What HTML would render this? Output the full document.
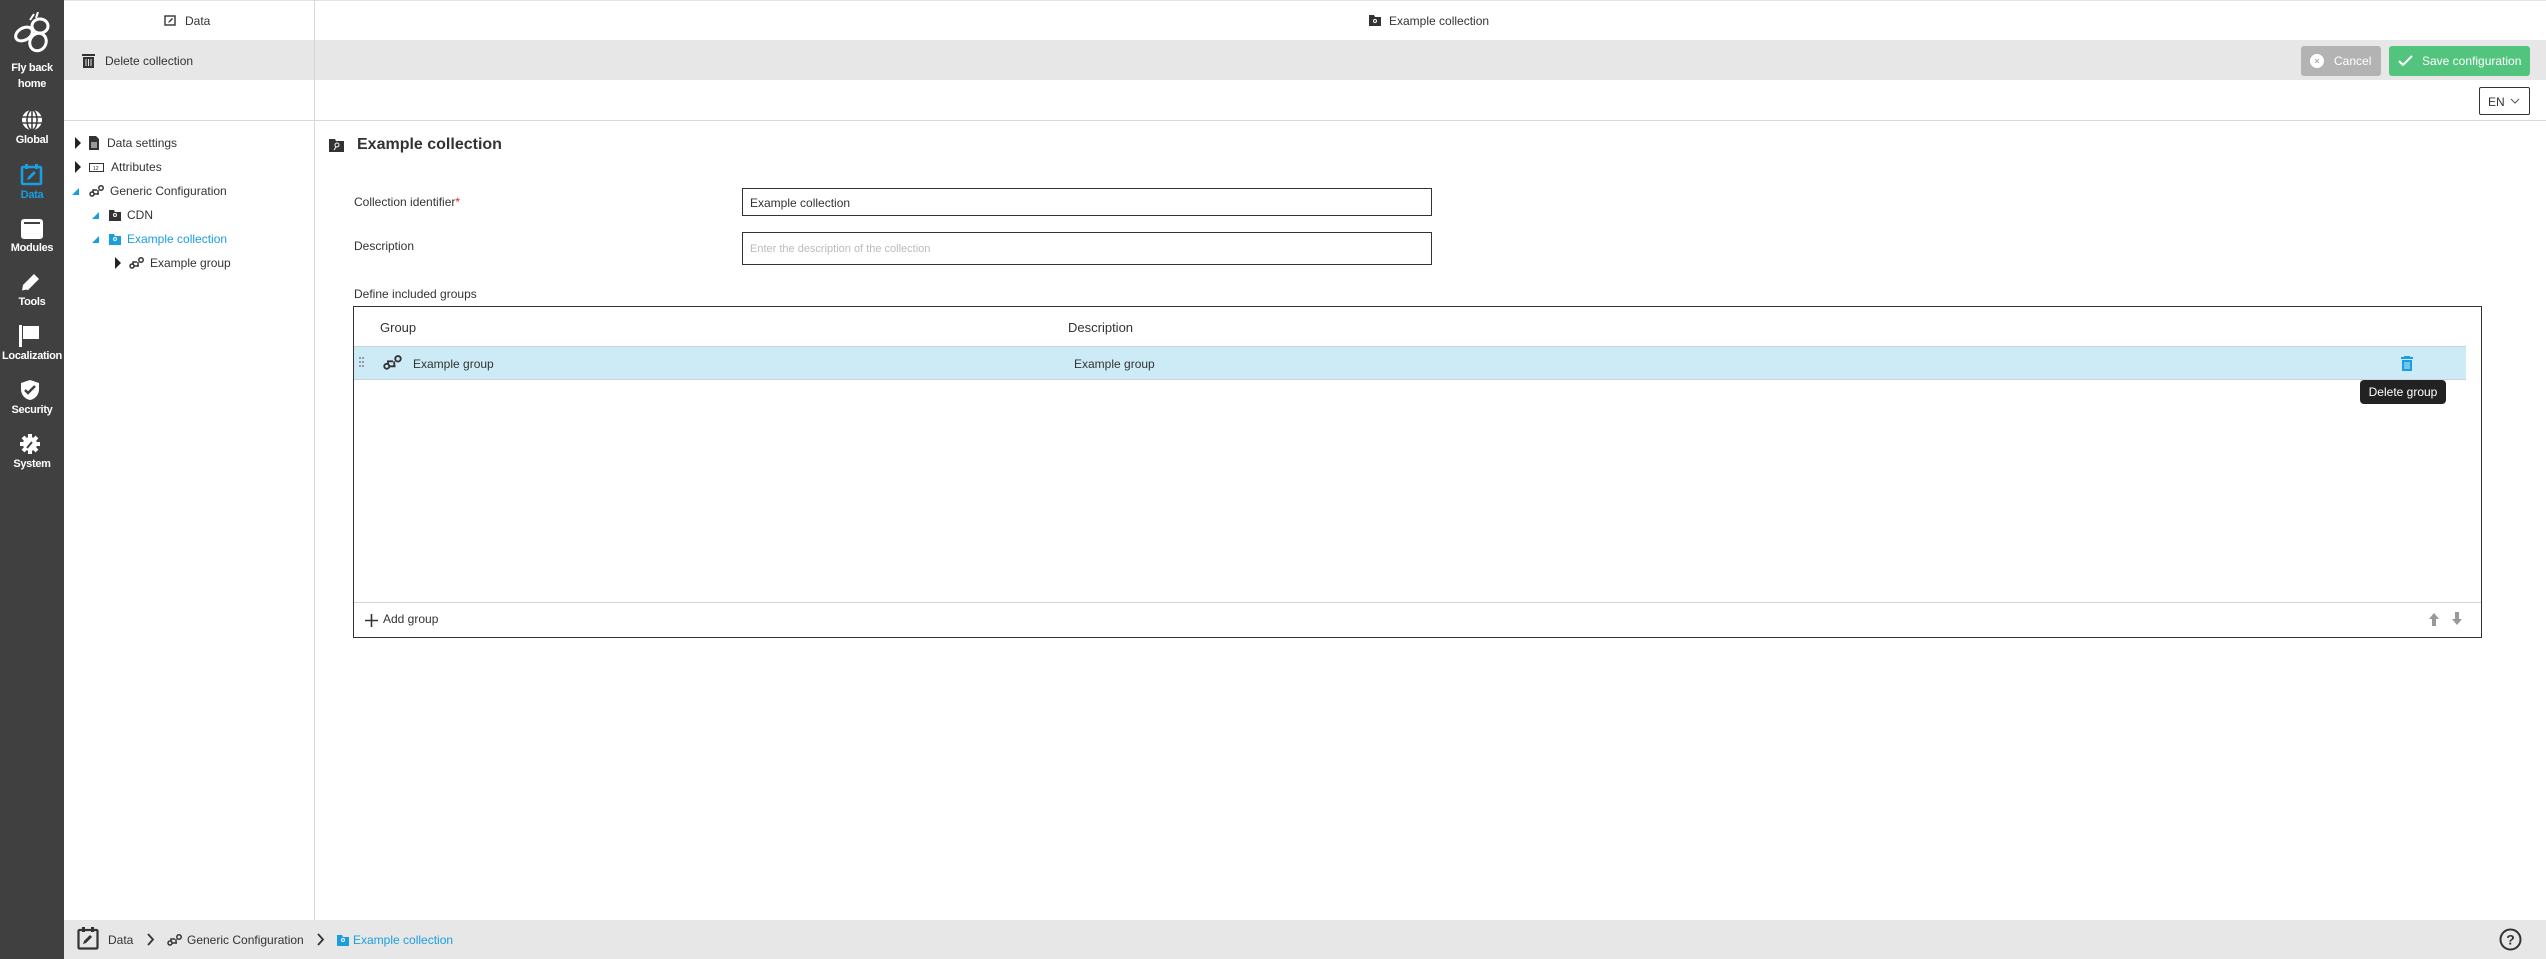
<!DOCTYPE html>
<html><head><meta charset="utf-8">
<style>
*{box-sizing:border-box;margin:0;padding:0}
body{width:2546px;height:959px;position:relative;overflow:hidden;background:#fff;font-family:"Liberation Sans",Arial,sans-serif;font-size:12px;color:#333}
.a{position:absolute}
.side{left:0;top:0;width:64px;height:959px;background:#404040}
.nav{position:absolute;left:0;width:64px;text-align:center;color:#fff;font-size:11px;font-weight:bold;letter-spacing:-0.3px}
.t{position:absolute;white-space:nowrap}
.tri{position:absolute;width:0;height:0;border-top:6px solid transparent;border-bottom:6px solid transparent;border-left:6px solid #222}
.otri{position:absolute;width:0;height:0;border-left:7px solid transparent;border-bottom:7px solid #1a9ee0}
.btn{position:absolute;border-radius:3px;color:#fff;font-size:12px}
</style></head><body>
<div class="a side"></div>
<svg class="a" style="left:12px;top:12px" width="40" height="42" viewBox="0 0 40 42"><g fill="none" stroke="#fff" stroke-width="3"><ellipse cx="12" cy="22" rx="9" ry="6" transform="rotate(-30 12 22)"/><ellipse cx="28" cy="14" rx="8" ry="7"/><ellipse cx="26" cy="30" rx="8" ry="9" transform="rotate(30 26 30)"/></g><path d="M18 8 l4 -6 M24 6 l2 -6" stroke="#fff" stroke-width="2"/></svg>
<div class="nav" style="top:60px;line-height:16px">Fly back<br>home</div>
<svg class="a" style="left:21px;top:109px" width="22" height="22" viewBox="0 0 22 22"><circle cx="11" cy="11" r="10" fill="#fff"/><g stroke="#404040" stroke-width="1.6" fill="none"><path d="M1 8h20M1 14h20M11 1v20"/><ellipse cx="11" cy="11" rx="5" ry="10"/></g></svg>
<div class="nav" style="top:134px">Global</div>
<svg class="a" style="left:20px;top:163px" width="24" height="23" viewBox="0 0 24 23"><rect x="2" y="4" width="19" height="17" rx="1" fill="none" stroke="#1a9ee0" stroke-width="2.6"/><rect x="5" y="1" width="3" height="5" fill="#1a9ee0"/><rect x="15" y="1" width="3" height="5" fill="#1a9ee0"/><path d="M7 17l1-3 6-6 2 2-6 6z" fill="#1a9ee0"/></svg>
<div class="nav" style="top:189px;color:#1a9ee0">Data</div>
<svg class="a" style="left:20px;top:218px" width="24" height="22" viewBox="0 0 24 22"><rect x="1" y="1" width="22" height="20" rx="3" fill="#fff"/><rect x="4" y="4" width="16" height="2" fill="#404040"/></svg>
<div class="nav" style="top:242px">Modules</div>
<svg class="a" style="left:19px;top:272px" width="22" height="22" viewBox="0 0 22 22"><path d="M3 19l1-6 11-11 5 5-11 11z" fill="#fff"/><path d="M3 19l5-1" stroke="#404040"/></svg>
<div class="nav" style="top:296px">Tools</div>
<svg class="a" style="left:19px;top:325px" width="22" height="22" viewBox="0 0 22 22"><rect x="0" y="0" width="3" height="22" fill="#fff"/><path d="M4 1h16v13h-16z" fill="#fff"/></svg>
<div class="nav" style="top:350px;font-size:11px">Localization</div>
<svg class="a" style="left:19px;top:379px" width="22" height="22" viewBox="0 0 22 22"><path d="M11 1l9 3v6c0 6-4 10-9 11-5-1-9-5-9-11v-6z" fill="#fff"/><path d="M6 11l3 3 7-7" stroke="#404040" stroke-width="2.5" fill="none"/></svg>
<div class="nav" style="top:404px">Security</div>
<svg class="a" style="left:19px;top:433px" width="22" height="22" viewBox="0 0 22 22"><circle cx="11" cy="11" r="7" fill="#fff"/><g stroke="#fff" stroke-width="4"><path d="M11 1v20M1 11h20M4 4l14 14M18 4l-14 14"/></g><path d="M8 15l5-6" stroke="#404040" stroke-width="2"/></svg>
<div class="nav" style="top:458px">System</div>

<div class="a" style="left:64px;top:0;width:2482px;height:1px;background:#e3e3e3"></div>
<div class="a" style="left:314px;top:0;width:1px;height:920px;background:#d8d8d8"></div>
<svg class="a" style="left:164px;top:14px" width="12" height="12" viewBox="0 0 12 12"><rect x="1" y="2" width="10" height="9" fill="none" stroke="#333" stroke-width="1.4"/><path d="M4 9l1-2 3-3 1 1-3 3z" fill="#333"/></svg>
<div class="t" style="left:185px;top:14px">Data</div>
<svg class="a" style="left:1369px;top:14px" width="12" height="12" viewBox="0 0 12 12"><path d="M0 1h5l1 2h6v9h-12z" fill="#333"/><circle cx="6" cy="7" r="1.5" stroke="#fff" fill="none"/></svg>
<div class="t" style="left:1389px;top:14px">Example collection</div>
<div class="a" style="left:64px;top:40px;width:2482px;height:40px;background:#e7e7e7"></div>
<div class="a" style="left:314px;top:40px;width:1px;height:40px;background:#d4d4d4"></div>
<svg class="a" style="left:82px;top:53px" width="13" height="15" viewBox="0 0 13 15"><rect x="0" y="1" width="13" height="2" fill="#333"/><rect x="1" y="4" width="11" height="11" fill="#333"/><g stroke="#e7e7e7"><path d="M4 6v7M6.5 6v7M9 6v7"/></g></svg>
<div class="t" style="left:105px;top:54px">Delete collection</div>
<div class="btn" style="left:2301px;top:46px;width:80px;height:30px;background:#b3b3b3"><svg class="a" style="left:9px;top:8px" width="14" height="14"><circle cx="7" cy="7" r="7" fill="#fff"/><path d="M5 5l4 4M9 5l-4 4" stroke="#b3b3b3" stroke-width="1.2"/></svg><span class="t" style="left:33px;top:8px">Cancel</span></div>
<div class="btn" style="left:2389px;top:46px;width:141px;height:30px;background:#52c47e"><svg class="a" style="left:9px;top:9px" width="16" height="12"><path d="M1 6l4 4 9-9" stroke="#fff" stroke-width="2" fill="none"/></svg><span class="t" style="left:33px;top:8px">Save configuration</span></div>
<div class="a" style="left:2479px;top:87px;width:51px;height:28px;border:1px solid #333;border-radius:2px"><span class="t" style="left:8px;top:7px">EN</span><svg class="a" style="left:30px;top:10px" width="10" height="7"><path d="M1 1l4 4 4-4" stroke="#555" fill="none"/></svg></div>
<div class="a" style="left:64px;top:120px;width:2482px;height:1px;background:#d8d8d8"></div>

<div class="tri" style="left:75px;top:137px"></div>
<svg class="a" style="left:89px;top:136px" width="10" height="14"><path d="M0 0h7l3 3v11h-10z" fill="#333"/><path d="M2 7h6M2 9h6M2 11h6" stroke="#fff"/></svg>
<div class="t" style="left:107px;top:136px">Data settings</div>
<div class="tri" style="left:75px;top:161px"></div>
<svg class="a" style="left:89px;top:163px" width="15" height="9"><rect x="0.5" y="0.5" width="14" height="8" fill="none" stroke="#333"/><text x="4" y="7" font-size="5" fill="#333">12</text></svg>
<div class="t" style="left:111px;top:160px">Attributes</div>
<div class="otri" style="left:72px;top:188px"></div>
<svg class="a" style="left:89px;top:185px" width="16" height="12" viewBox="0 0 16 12"><g fill="none" stroke="#333" stroke-width="1.5"><circle cx="3" cy="9" r="2"/><circle cx="12" cy="3" r="2.2"/><path d="M5 9h5M8 5h-4v2M9 5v4"/></g></svg>
<div class="t" style="left:110px;top:184px">Generic Configuration</div>
<div class="otri" style="left:92px;top:212px"></div>
<svg class="a" style="left:109px;top:209px" width="12" height="12"><path d="M0 1h5l1 2h6v9h-12z" fill="#333"/><circle cx="6" cy="6" r="1.5" stroke="#fff" fill="none"/></svg>
<div class="t" style="left:127px;top:208px">CDN</div>
<div class="otri" style="left:92px;top:236px"></div>
<svg class="a" style="left:109px;top:233px" width="12" height="12"><path d="M0 1h5l1 2h6v9h-12z" fill="#1a9ee0"/><circle cx="6" cy="6" r="1.5" stroke="#fff" fill="none"/></svg>
<div class="t" style="left:127px;top:232px;color:#1a9ee0">Example collection</div>
<div class="tri" style="left:115px;top:257px"></div>
<svg class="a" style="left:129px;top:257px" width="16" height="12" viewBox="0 0 16 12"><g fill="none" stroke="#333" stroke-width="1.5"><circle cx="3" cy="9" r="2"/><circle cx="12" cy="3" r="2.2"/><path d="M5 9h5M8 5h-4v2M9 5v4"/></g></svg>
<div class="t" style="left:150px;top:256px">Example group</div>

<svg class="a" style="left:329px;top:138px" width="15" height="14"><path d="M0 1h6l1 2h8v11h-15z" fill="#333"/><circle cx="8" cy="7" r="2" stroke="#fff" fill="none"/><path d="M7 9l-2 3" stroke="#fff"/></svg>
<div class="t" style="left:357px;top:136px;font-size:16px;font-weight:bold;color:#333">Example collection</div>
<div class="t" style="left:354px;top:195px">Collection identifier<span style="color:#d22">*</span></div>
<div class="a" style="left:742px;top:188px;width:690px;height:28px;border:1px solid #333"><span class="t" style="left:7px;top:7px">Example collection</span></div>
<div class="t" style="left:354px;top:239px">Description</div>
<div class="a" style="left:742px;top:232px;width:690px;height:33px;border:1px solid #333"><span class="t" style="left:7px;top:10px;font-size:11px;color:#bbb">Enter the description of the collection</span></div>
<div class="t" style="left:354px;top:287px">Define included groups</div>
<div class="a" style="left:353px;top:306px;width:2129px;height:332px;border:1px solid #333"></div>
<div class="t" style="left:380px;top:320px;font-size:13px">Group</div>
<div class="t" style="left:1068px;top:320px;font-size:13px">Description</div>
<div class="a" style="left:354px;top:346px;width:2112px;height:34px;background:#cdebf7;border-top:1px solid #c8d4d9;border-bottom:1px solid #c8d4d9"></div>
<svg class="a" style="left:359px;top:357px" width="6" height="11"><g fill="#999"><rect x="0" y="0" width="2" height="2"/><rect x="3" y="0" width="2" height="2"/><rect x="0" y="4" width="2" height="2"/><rect x="3" y="4" width="2" height="2"/><rect x="0" y="8" width="2" height="2"/><rect x="3" y="8" width="2" height="2"/></g></svg>
<svg class="a" style="left:383px;top:355px" width="20" height="15" viewBox="0 0 16 12"><g fill="none" stroke="#333" stroke-width="1.5"><circle cx="3" cy="9" r="2"/><circle cx="12" cy="3" r="2.2"/><path d="M5 9h5M8 5h-4v2M9 5v4"/></g></svg>
<div class="t" style="left:413px;top:357px">Example group</div>
<div class="t" style="left:1074px;top:357px">Example group</div>
<svg class="a" style="left:2401px;top:356px" width="12" height="15"><rect x="0" y="1" width="12" height="2" fill="#1a9ee0"/><rect x="3" y="0" width="6" height="2" fill="#1a9ee0"/><rect x="1" y="4" width="10" height="11" fill="#1a9ee0"/><g stroke="#cdebf7"><path d="M4 6v7M6 6v7M8 6v7"/></g></svg>
<div class="a" style="left:2360px;top:380px;width:86px;height:24px;background:#222;border-radius:4px;color:#fff;font-size:12px;text-align:center;line-height:24px">Delete group</div>
<div class="a" style="left:354px;top:602px;width:2127px;height:1px;background:#d4d4d4"></div>
<svg class="a" style="left:365px;top:614px" width="13" height="13"><path d="M6.5 0v13M0 6.5h13" stroke="#333" stroke-width="1.6"/></svg>
<div class="t" style="left:383px;top:612px">Add group</div>
<svg class="a" style="left:2428px;top:612px" width="12" height="14"><path d="M6 1l5 6h-3v7h-4v-7h-3z" fill="#999"/></svg>
<svg class="a" style="left:2451px;top:612px" width="12" height="14"><path d="M6 13l5-6h-3v-7h-4v7h-3z" fill="#999"/></svg>

<div class="a" style="left:64px;top:920px;width:2482px;height:39px;background:#e7e7e7"></div>
<svg class="a" style="left:77px;top:926px" width="22" height="24" viewBox="0 0 22 24"><rect x="1.5" y="4" width="19" height="18.5" rx="1" fill="none" stroke="#333" stroke-width="2.2"/><rect x="5" y="1" width="3" height="5" fill="#333"/><rect x="14" y="1" width="3" height="5" fill="#333"/><path d="M6 18l1-3 6-6 2 2-6 6z" fill="#333"/></svg>
<div class="t" style="left:108px;top:933px">Data</div>
<svg class="a" style="left:147px;top:933px" width="8" height="13"><path d="M1 1l5 5.5-5 5.5" stroke="#333" stroke-width="1.8" fill="none"/></svg>
<svg class="a" style="left:167px;top:934px" width="16" height="12" viewBox="0 0 16 12"><g fill="none" stroke="#333" stroke-width="1.5"><circle cx="3" cy="9" r="2"/><circle cx="12" cy="3" r="2.2"/><path d="M5 9h5M8 5h-4v2M9 5v4"/></g></svg>
<div class="t" style="left:187px;top:933px">Generic Configuration</div>
<svg class="a" style="left:317px;top:933px" width="8" height="13"><path d="M1 1l5 5.5-5 5.5" stroke="#333" stroke-width="1.8" fill="none"/></svg>
<svg class="a" style="left:337px;top:934px" width="12" height="12"><path d="M0 1h5l1 2h6v9h-12z" fill="#1a9ee0"/><circle cx="6" cy="6" r="1.5" stroke="#fff" fill="none"/></svg>
<div class="t" style="left:353px;top:933px;color:#1a9ee0">Example collection</div>
<svg class="a" style="left:2499px;top:928px" width="23" height="23"><circle cx="11.5" cy="11.5" r="10" fill="none" stroke="#333" stroke-width="2"/><text x="11.5" y="16.5" font-size="14" font-weight="bold" text-anchor="middle" fill="#333" font-family="Liberation Sans">?</text></svg>
</body></html>
